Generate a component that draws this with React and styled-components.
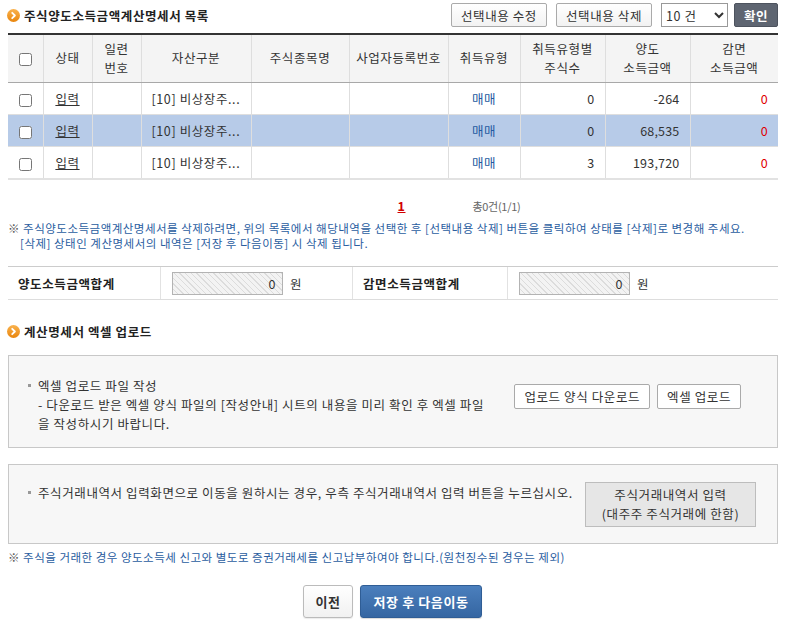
import React from "react";
import styled, { createGlobalStyle } from "styled-components";

const rows = [
  { id: 1, asset: "[10] 비상장주...", type: "매매", qty: "0", amount: "-264", reduce: "0" },
  { id: 2, asset: "[10] 비상장주...", type: "매매", qty: "0", amount: "68,535", reduce: "0", selected: true },
  { id: 3, asset: "[10] 비상장주...", type: "매매", qty: "3", amount: "193,720", reduce: "0" },
];

const colWidths = [35, 49, 49, 110, 98, 99, 72, 85, 85, 88];

const OrangeIcon = () => (
  <svg width="13" height="13" viewBox="0 0 13 13">
    <defs>
      <linearGradient id="og" x1="0" y1="0" x2="0" y2="1">
        <stop offset="0" stopColor="#f9b24e" />
        <stop offset="1" stopColor="#e9850c" />
      </linearGradient>
    </defs>
    <circle cx="6.5" cy="6.5" r="6.5" fill="url(#og)" />
    <path d="M5.2 3.8 L7.9 6.5 L5.2 9.2" fill="none" stroke="#fff" strokeWidth="1.8" strokeLinecap="round" strokeLinejoin="round" />
  </svg>
);

const App = () => {
  return (
    <>
      <GlobalStyle />
      <Page>
        <HeadBar>
          <Title>
            <OrangeIcon />
            주식양도소득금액계산명세서 목록
          </Title>
          <Tools>
            <ToolButton>선택내용 수정</ToolButton>
            <ToolButton>선택내용 삭제</ToolButton>
            <CountSelect defaultValue="10">
              <option value="10">10 건</option>
              <option value="20">20 건</option>
            </CountSelect>
            <ConfirmButton>확인</ConfirmButton>
          </Tools>
        </HeadBar>

        <ListTable>
          <colgroup>
            {colWidths.map((w, i) => (
              <col key={i} style={{ width: w }} />
            ))}
          </colgroup>
          <thead>
            <tr>
              <Th><Check type="checkbox" /></Th>
              <Th>상태</Th>
              <Th>일련<br />번호</Th>
              <Th>자산구분</Th>
              <Th>주식종목명</Th>
              <Th>사업자등록번호</Th>
              <Th>취득유형</Th>
              <Th>취득유형별<br />주식수</Th>
              <Th>양도<br />소득금액</Th>
              <Th>감면<br />소득금액</Th>
            </tr>
          </thead>
          <tbody>
            {rows.map((r) => (
              <Tr key={r.id} $selected={r.selected}>
                <Td $align="center"><Check type="checkbox" /></Td>
                <Td $align="center"><StatusLink>입력</StatusLink></Td>
                <Td />
                <Td>{r.asset}</Td>
                <Td />
                <Td />
                <Td $align="center" $color="#2459a0">{r.type}</Td>
                <Td $align="right">{r.qty}</Td>
                <Td $align="right">{r.amount}</Td>
                <Td $align="right" $color="#e00000">{r.reduce}</Td>
              </Tr>
            ))}
          </tbody>
        </ListTable>

        <Paging>
          <span />
          <PageNum>1</PageNum>
          <Total>총0건(1/1)</Total>
        </Paging>

        <Notice>
          <Mark>※</Mark> 주식양도소득금액계산명세서를 삭제하려면, 위의 목록에서 해당내역을 선택한 후 [선택내용 삭제] 버튼을 클릭하여 상태를 [삭제]로 변경해 주세요.
          <NoticeIndent>[삭제] 상태인 계산명세서의 내역은 [저장 후 다음이동] 시 삭제 됩니다.</NoticeIndent>
        </Notice>

        <SumRow>
          <SumLabel>양도소득금액합계</SumLabel>
          <SumCell>
            <ReadBox>0</ReadBox>
            <Unit>원</Unit>
          </SumCell>
          <SumLabel>감면소득금액합계</SumLabel>
          <SumCell $last>
            <ReadBox>0</ReadBox>
            <Unit>원</Unit>
          </SumCell>
        </SumRow>

        <SubTitle>
          <OrangeIcon />
          계산명세서 엑셀 업로드
        </SubTitle>

        <UploadBox>
          <Item>
            <Bullet />
            <div>
              엑셀 업로드 파일 작성
              <br />- 다운로드 받은 엑셀 양식 파일의 [작성안내] 시트의 내용을 미리 확인 후 엑셀 파일
              <br />을 작성하시기 바랍니다.
            </div>
          </Item>
          <BoxButtons>
            <BoxButton>업로드 양식 다운로드</BoxButton>
            <BoxButton>엑셀 업로드</BoxButton>
          </BoxButtons>
        </UploadBox>

        <TradeBox>
          <Item>
            <Bullet />
            <div>주식거래내역서 입력화면으로 이동을 원하시는 경우, 우측 주식거래내역서 입력 버튼을 누르십시오.</div>
          </Item>
          <TradeButton>
            주식거래내역서 입력
            <br />
            (대주주 주식거래에 한함)
          </TradeButton>
        </TradeBox>

        <Notice $gap="6px">
          <Mark>※</Mark> 주식을 거래한 경우 양도소득세 신고와 별도로 증권거래세를 신고납부하여야 합니다.(원천징수된 경우는 제외)
        </Notice>

        <Footer>
          <PrevButton>이전</PrevButton>
          <NextButton>저장 후 다음이동</NextButton>
        </Footer>
      </Page>
    </>
  );
};

export default App;

const GlobalStyle = createGlobalStyle`
  body {
    margin: 0;
    background: #fff;
    font-family: "Noto Sans CJK KR", "Noto Sans", sans-serif;
    font-size: 12.5px;
    letter-spacing: 0.6px;
    color: #333;
  }
  button, select {
    font-family: "Noto Sans CJK KR", "Noto Sans", sans-serif;
    letter-spacing: inherit;
  }
`;

const Page = styled.div`
  padding: 3px 9px 10px 8px;
`;

const HeadBar = styled.div`
  display: flex;
  align-items: center;
  justify-content: space-between;
  height: 24px;
  margin-bottom: 6px;
`;

const Title = styled.h2`
  display: flex;
  align-items: center;
  gap: 4px;
  margin: 0 0 0 -1px;
  font-size: 12.5px;
  font-weight: bold;
  color: #222;
`;

const SubTitle = styled(Title)`
  margin-top: 21px;
  margin-bottom: 14px;
  height: 20px;
`;

const Tools = styled.div`
  display: flex;
  align-items: center;
  gap: 9px;
`;

const ToolButton = styled.button`
  height: 24px;
  padding: 0 9px;
  border: 1px solid #aaa;
  border-radius: 2px;
  background: linear-gradient(#fff, #f2f2f2);
  font-size: 12.5px;
  color: #333;
  cursor: pointer;
`;

const CountSelect = styled.select`
  width: 67px;
  height: 24px;
  border: 1px solid #999;
  font-size: 12.5px;
  color: #333;
  background: #fff;
`;

const ConfirmButton = styled.button`
  height: 24px;
  width: 44px;
  margin-left: -3px;
  padding: 0;
  border: 1px solid #4d535e;
  border-radius: 2px;
  background: #5e6571;
  color: #fff;
  font-size: 12.5px;
  font-weight: bold;
`;

const ListTable = styled.table`
  width: 100%;
  table-layout: fixed;
  border-collapse: collapse;
  border-top: 2px solid #333;
  border-bottom: 2px solid #e2e2e2;
`;

const Th = styled.th`
  height: 47px;
  padding: 0;
  background: #f4f4f4;
  border-bottom: 1px solid #a8a8a8;
  border-right: 1px solid #dedede;
  font-weight: normal;
  line-height: 18.5px;
  color: #333;
  &:last-child {
    border-right: none;
  }
`;

const Tr = styled.tr`
  background: ${(p) => (p.$selected ? "#b7cbe8" : "#fff")};
`;

const Td = styled.td`
  height: 31px;
  padding: 0 10px;
  border-bottom: 1px solid #dedede;
  border-right: 1px solid #dedede;
  text-align: ${(p) => p.$align || "left"};
  color: ${(p) => p.$color || "#333"};
  letter-spacing: ${(p) => (p.$align === "right" ? "0.2px" : "inherit")};
  white-space: nowrap;
  overflow: hidden;
  &:last-child {
    border-right: none;
  }
`;

const Check = styled.input`
  width: 13px;
  height: 13px;
  margin: 0;
  vertical-align: middle;
`;

const StatusLink = styled.a`
  color: #333;
  text-decoration: underline;
  cursor: pointer;
`;

const Paging = styled.div`
  display: grid;
  grid-template-columns: 1fr auto 1fr;
  align-items: center;
  margin-top: 16px;
  height: 16px;
`;

const PageNum = styled.a`
  margin-left: 17px;
  color: #d20000;
  font-weight: bold;
  text-decoration: underline;
`;

const Total = styled.span`
  padding-left: 67px;
  font-size: 11px;
  color: #666;
  letter-spacing: -0.3px;
`;

const Notice = styled.p`
  margin: ${(p) => p.$gap || "9px"} 0 0;
  font-size: 11.5px;
  line-height: 15px;
  color: #2a5d9f;
  letter-spacing: 0.5px;
`;

const NoticeIndent = styled.span`
  display: block;
  padding-left: 12px;
`;

const Mark = styled.span`
  color: #555;
`;

const SumRow = styled.div`
  display: grid;
  grid-template-columns: 153px 192px 155px 1fr;
  height: 32px;
  margin-top: 15px;
  border-top: 1px solid #ccc;
  border-bottom: 1px solid #ddd;
`;

const SumLabel = styled.div`
  display: flex;
  align-items: center;
  padding-left: 10px;
  border-right: 1px solid #e2e2e2;
  font-weight: bold;
  color: #222;
`;

const SumCell = styled.div`
  display: flex;
  align-items: center;
  padding-left: 11px;
  border-right: ${(p) => (p.$last ? "none" : "1px solid #e2e2e2")};
`;

const ReadBox = styled.div`
  box-sizing: border-box;
  width: 111px;
  height: 23px;
  padding-right: 6px;
  border: 1px solid #b3b3b3;
  background: repeating-linear-gradient(45deg, #f3f3f3 0 3px, #dcdcdc 3px 4px);
  text-align: right;
  line-height: 21px;
  color: #333;
`;

const Unit = styled.span`
  margin-left: 7px;
  color: #333;
`;

const Box = styled.div`
  box-sizing: border-box;
  display: flex;
  align-items: flex-start;
  justify-content: space-between;
  border: 1px solid #c8c8c8;
  background: #f7f7f7;
`;

const UploadBox = styled(Box)`
  height: 93px;
  padding: 19px 36px 0 19px;
`;

const TradeBox = styled(Box)`
  height: 80px;
  margin-top: 16px;
  padding: 17px 21px 0 19px;
`;

const Item = styled.div`
  display: flex;
  align-items: flex-start;
  line-height: 19px;
  color: #333;
  padding-top: 1px;
`;

const Bullet = styled.span`
  flex: none;
  width: 3px;
  height: 3px;
  margin: 8px 7px 0 0;
  background: #999;
`;

const BoxButtons = styled.div`
  display: flex;
  gap: 7px;
  margin-top: 9px;
`;

const BoxButton = styled.button`
  height: 25px;
  padding: 0 9px;
  border: 1px solid #aaa;
  border-radius: 2px;
  background: #fff;
  font-size: 12.5px;
  color: #333;
`;

const TradeButton = styled.button`
  width: 171px;
  height: 45px;
  padding: 0;
  border: 1px solid #bdbdbd;
  background: #e6e6e6;
  line-height: 18.5px;
  font-size: 12.5px;
  color: #333;
`;

const Footer = styled.div`
  display: flex;
  justify-content: center;
  gap: 7px;
  margin-top: 20px;
  padding-right: 1px;
`;

const PrevButton = styled.button`
  width: 50px;
  height: 33px;
  padding: 0;
  border: 1px solid #bbb;
  border-radius: 3px;
  background: linear-gradient(#fff, #f1f1f1);
  font-size: 13px;
  font-weight: bold;
  color: #333;
  box-shadow: 0 1px 1px rgba(0, 0, 0, 0.08);
`;

const NextButton = styled.button`
  width: 122px;
  height: 33px;
  padding: 0;
  border: 1px solid #2f5d95;
  border-radius: 3px;
  background: linear-gradient(#4b7fbd, #3566a2);
  font-size: 13px;
  font-weight: bold;
  color: #fff;
  box-shadow: 0 1px 1px rgba(0, 0, 0, 0.15);
`;
